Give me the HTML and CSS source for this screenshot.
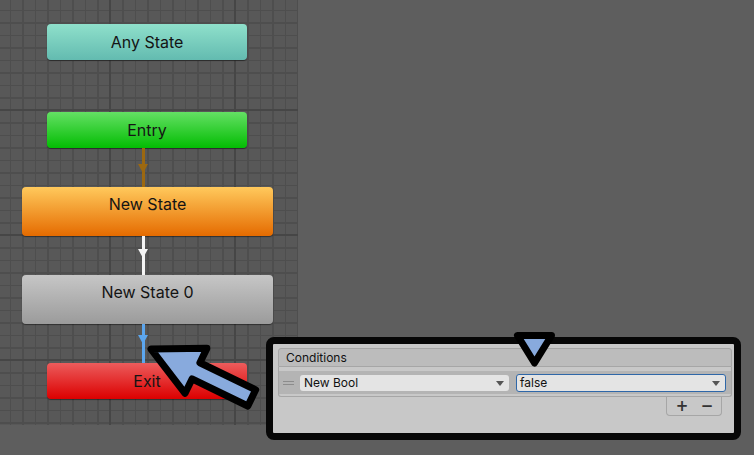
FILE: index.html
```html
<!DOCTYPE html>
<html>
<head>
  <title>Animator</title>
  <link rel="stylesheet" href="styles.css">
</head>
<body>

<div class="window">
  <div class="graph">
    <div class="node teal first">Any State</div>
    <div class="node green">Entry</div>
    <div class="link brown"></div>
    <div class="node state orange">New State</div>
    <div class="link white"></div>
    <div class="node state gray">New State 0</div>
    <div class="link blue"></div>
    <div class="node red">Exit</div>
  </div>

  <div class="inspector">
    <div class="cond-header">Conditions</div>
    <div class="cond-body">
      <div class="cond-row">
        <span class="handle"></span>
        <div class="field param">New Bool<span class="caret"></span></div>
        <div class="field value focus">false<span class="caret"></span></div>
      </div>
    </div>
    <div class="cond-footer">
      <span class="btn">+</span>
      <span class="btn">&minus;</span>
    </div>
  </div>

  <svg class="callout" width="754" height="455" viewBox="0 0 754 455">
    <polygon points="0,0 50,-25 50,-9 112,-9 112,9 50,9 50,25"
             transform="translate(151 349) rotate(25.9)"
             fill="#88aadd" stroke="#000" stroke-width="7" stroke-linejoin="round"/>
    <polygon points="517.5,335.5 551.5,335.5 534.5,363"
             fill="#88aadd" stroke="#000" stroke-width="7" stroke-linejoin="round"/>
  </svg>
</div>

</body>
</html>
```

FILE: styles.css
```css
body {
  margin: 0;
  padding: 0;
  background-color: #5e5e5e;
  font-family: Inter, "Noto Sans", sans-serif;
}

.window {
  position: relative;
  width: 754px;
  height: 455px;
  overflow: hidden;
}

/* graph canvas */

.graph {
  width: 298px;
  height: 425px;
  box-sizing: border-box;
  padding: 24px 4px 0 0;
  display: flex;
  flex-direction: column;
  align-items: center;
  background-color: #585858;
  background-image:
    linear-gradient(90deg, #464646 2px, transparent 2px),
    linear-gradient(180deg, #464646 2px, transparent 2px),
    repeating-linear-gradient(90deg, #4e4e4e 0 1px, transparent 1px 12.5px),
    repeating-linear-gradient(180deg, #4e4e4e 0 1px, transparent 1px 12.5px);
  background-size: 125px 125px;
  background-position: 109px 109px, 109px 109px, 10px 10px, 10px 10px;
}

.node {
  width: 200px;
  height: 36px;
  flex-shrink: 0;
  border-radius: 4px;
  text-align: center;
  line-height: 36px;
  font-size: 16px;
  color: #141414;
  box-shadow: 0 1px 1px rgba(0,0,0,0.45);
}

.node.first {
  margin-bottom: 52px;
}

.node.state {
  width: 251px;
  height: 49px;
  line-height: 35px;
  margin-left: 1px;
}

.teal   { background: linear-gradient(#8fe0cb, #63bbb0); }
.green  { background: linear-gradient(#64e064, #03bd03); }
.orange { background: linear-gradient(#ffc95c, #e56b00); }
.gray   { background: linear-gradient(#c6c6c6, #9b9b9b); }
.red    { background: linear-gradient(#ec5c5c, #dc0000); }

/* transitions */

.link {
  width: 11px;
  height: 39px;
  flex-shrink: 0;
  margin-left: -8px;
  display: flex;
  justify-content: center;
  background: linear-gradient(90deg, transparent 4px, var(--c) 4px 7px, transparent 7px);
}

.link::after {
  content: "";
  width: 0;
  height: 0;
  margin-top: var(--head);
  border-left: 5.5px solid transparent;
  border-right: 5.5px solid transparent;
  border-top: 9px solid var(--c);
}

.link.brown { --c: #9c6810; --head: 16px; }
.link.white { --c: #f4f4f4; --head: 13px; }
.link.blue  { --c: #5ca6ee; --head: 11px; }

/* conditions inspector */

.inspector {
  position: absolute;
  left: 266px;
  top: 337px;
  width: 475px;
  height: 103px;
  box-sizing: border-box;
  border: 7px solid #070707;
  border-radius: 8px;
  background-color: #c8c8c8;
  padding: 4px 2px 0 5px;
  display: flex;
  flex-direction: column;
  font-size: 12px;
  color: #111;
}

.cond-header {
  height: 17px;
  line-height: 18px;
  padding-left: 7px;
  border: 1px solid #a6a6a6;
  border-radius: 3px 3px 0 0;
  background-color: #bcbcbc;
}

.cond-body {
  padding: 4px 0 2px;
  border: 1px solid #a6a6a6;
  border-top: none;
  border-radius: 0 0 3px 3px;
}

.cond-row {
  height: 23px;
  display: flex;
  align-items: center;
  padding: 0 5px 0 4px;
  background-color: #b4b4b4;
}

.handle {
  width: 11px;
  height: 4px;
  margin-right: 6px;
  border-top: 1px solid #8c8c8c;
  border-bottom: 1px solid #8c8c8c;
  box-sizing: border-box;
}

.field {
  position: relative;
  height: 16px;
  line-height: 16px;
  box-sizing: border-box;
  padding-left: 4px;
  border-radius: 3px;
  background-color: #e4e4e4;
}

.field.param {
  width: 209px;
  margin-right: 7px;
}

.field.value {
  flex: 1;
}

.field.focus {
  height: 18px;
  padding-left: 3px;
  border: 1px solid #2f67a8;
}

.caret {
  position: absolute;
  right: 5px;
  top: 6px;
  width: 0;
  height: 0;
  border-left: 4px solid transparent;
  border-right: 4px solid transparent;
  border-top: 5px solid #555;
}

.cond-footer {
  align-self: flex-end;
  width: 56px;
  height: 19px;
  margin-right: 10px;
  box-sizing: border-box;
  border: 1px solid #a6a6a6;
  border-top: none;
  border-radius: 0 0 4px 4px;
  display: flex;
  gap: 9px;
  padding-left: 7px;
}

.btn {
  width: 16px;
  text-align: center;
  font-family: "DejaVu Sans", sans-serif;
  font-size: 15px;
  font-weight: bold;
  line-height: 19px;
  color: #333;
}

/* annotation arrows */

.callout {
  position: absolute;
  left: 0;
  top: 0;
  pointer-events: none;
}
```
